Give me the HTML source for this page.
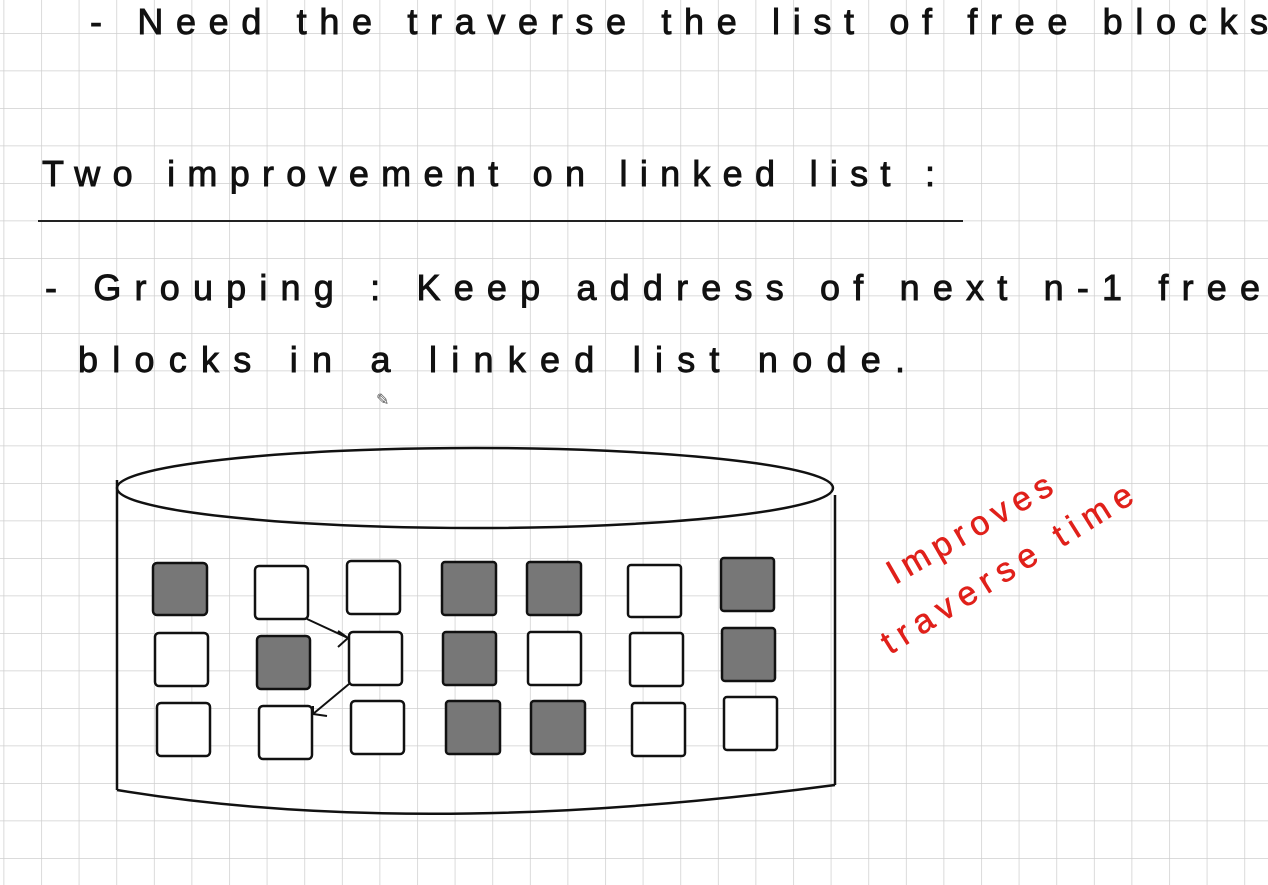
<!DOCTYPE html>
<html><head><style>
html,body{margin:0;padding:0;background:#fff;}
body{width:1268px;height:885px;overflow:hidden;}
svg{display:block}
text{font-family:"Liberation Sans",sans-serif;fill:#111;stroke:#111;stroke-width:0.9;}
</style></head><body>
<svg width="1268" height="885" viewBox="0 0 1268 885" xmlns="http://www.w3.org/2000/svg">
<defs>
<pattern id="g" x="3.5" y="-4.5" width="37.6" height="37.5" patternUnits="userSpaceOnUse">
<path d="M0 0H37.6M0 0V37.5" stroke="#cfcfcf" stroke-width="1.5" fill="none"/>
</pattern>
</defs>
<rect width="1268" height="885" fill="#fff"/>
<rect width="1268" height="885" fill="url(#g)"/>

<text x="90" y="34" font-size="36" textLength="1178" lengthAdjust="spacing">- Need   the   traverse   the  list   of  free  blocks</text>
<text x="42" y="186" font-size="36" textLength="893" lengthAdjust="spacing">Two  improvement  on  linked  list :</text>
<line x1="38" y1="221" x2="963" y2="221" stroke="#222" stroke-width="2"/>
<text x="45" y="300" font-size="36" textLength="1215" lengthAdjust="spacing">- Grouping : Keep  address  of  next  n-1  free</text>
<text x="78" y="372" font-size="36" textLength="827" lengthAdjust="spacing">blocks  in  a  linked  list  node.</text>
<text x="376" y="405" font-size="16" style="fill:#555;stroke:none">✎</text>

<g stroke="#111" stroke-width="2.5" fill="none">
<ellipse cx="475" cy="488" rx="358" ry="40"/>
<path d="M117 480V790"/>
<path d="M835 495V785"/>
<path d="M117 790Q420 840 835 785"/>
</g>

<g stroke="#111" stroke-width="2.5">
<rect x="153" y="563" width="54" height="52" rx="4" fill="#777"/>
<rect x="255" y="566" width="53" height="53" rx="4" fill="#fff"/>
<rect x="347" y="561" width="53" height="53" rx="4" fill="#fff"/>
<rect x="442" y="562" width="54" height="53" rx="3" fill="#777"/>
<rect x="527" y="562" width="54" height="53" rx="3" fill="#777"/>
<rect x="628" y="565" width="53" height="52" rx="3" fill="#fff"/>
<rect x="721" y="558" width="53" height="53" rx="3" fill="#777"/>

<rect x="155" y="633" width="53" height="53" rx="4" fill="#fff"/>
<rect x="257" y="636" width="53" height="53" rx="4" fill="#777"/>
<rect x="349" y="632" width="53" height="53" rx="4" fill="#fff"/>
<rect x="443" y="632" width="53" height="53" rx="3" fill="#777"/>
<rect x="528" y="632" width="53" height="53" rx="3" fill="#fff"/>
<rect x="630" y="633" width="53" height="53" rx="3" fill="#fff"/>
<rect x="722" y="628" width="53" height="53" rx="3" fill="#777"/>

<rect x="157" y="703" width="53" height="53" rx="4" fill="#fff"/>
<rect x="259" y="706" width="53" height="53" rx="4" fill="#fff"/>
<rect x="351" y="701" width="53" height="53" rx="4" fill="#fff"/>
<rect x="446" y="701" width="54" height="53" rx="3" fill="#777"/>
<rect x="531" y="701" width="54" height="53" rx="3" fill="#777"/>
<rect x="632" y="703" width="53" height="53" rx="3" fill="#fff"/>
<rect x="724" y="697" width="53" height="53" rx="3" fill="#fff"/>
</g>
<g stroke="#111" stroke-width="2" fill="none">
<path d="M307 619L348 638M338 631L348 638L338 647"/>
<path d="M349 684L313 714M313 706L313 714L327 716"/>
</g>

<g transform="rotate(-30 895 585)">
<text x="895" y="585" font-size="34" style="fill:#e0201a;stroke:#e0201a;stroke-width:0.6" textLength="185" lengthAdjust="spacing">Improves</text>
</g>
<g transform="rotate(-32 890 655)">
<text x="890" y="655" font-size="34" style="fill:#e0201a;stroke:#e0201a;stroke-width:0.6" textLength="290" lengthAdjust="spacing">traverse  time</text>
</g>
</svg>
</body></html>
